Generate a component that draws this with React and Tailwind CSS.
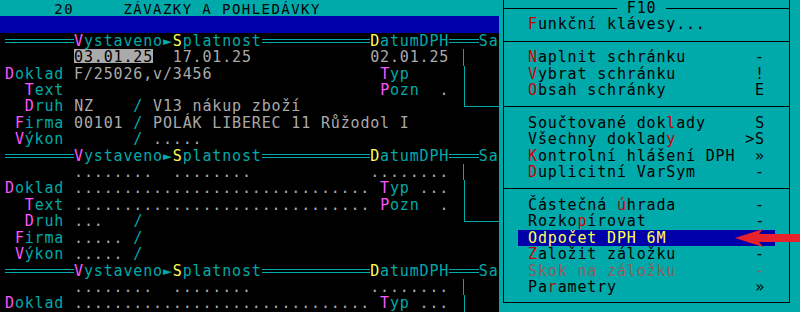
import React from 'react';

// DOS-like text grid: 9.87px per column, 16.42px per row
const CY = 'text-[#00aaaa]';
const GR = 'text-[#aaaaaa]';

function Row({ children, className = '' }) {
  return <div className={`h-[16.42px] whitespace-pre ${className}`}>{children}</div>;
}

function Lbl({ text }) {
  return (
    <>
      <span className="text-[#ff55ff]">{text[0]}</span>
      <span className={CY}>{text.slice(1)}</span>
    </>
  );
}

function G({ children }) {
  return <span className={GR}>{children}</span>;
}

function Dbl({ w }) {
  return (
    <span className={`inline-block align-top h-[16.42px] pt-[6px] ${w}`}>
      <span className="block h-[4px] border-y border-[#00aaaa]" />
    </span>
  );
}

function VLine() {
  return (
    <span className="inline-block align-top w-[9.87px] h-[16.42px]">
      <span className="block ml-[4.4px] h-full border-l border-[#00aaaa]" />
    </span>
  );
}

function Corner() {
  return (
    <>
      <span className="inline-block align-top w-[9.87px] h-[16.42px]">
        <span className="block ml-[4.4px] h-[8.7px] border-l border-b border-[#00aaaa]" />
      </span>
      <span className="inline-block align-top w-[29.61px] h-[8.7px] border-b border-[#00aaaa]" />
    </>
  );
}

function Header() {
  return (
    <Row>
      <Dbl w="w-[69.09px]" />
      <span className="text-[#ff55ff]">V</span>
      <span className={CY}>ystaveno►</span>
      <span className="text-[#ffff55]">S</span>
      <span className={CY}>platnost</span>
      <Dbl w="w-[108.57px]" />
      <span className="text-[#ffff55]">D</span>
      <span className={CY}>atumDPH</span>
      <Dbl w="w-[29.61px]" />
      <span className={CY}>Sa</span>
    </Row>
  );
}

const DOTS30 = '..............................';

function EmptyBlock({ rows = 7 }) {
  const all = [
    <Header key="h" />,
    <Row key="d">
      {'       '}<G>........</G>{'  '}<G>........</G>{'            '}<G>........</G>{' '}<VLine />
    </Row>,
    <Row key="dk">
      <Lbl text="Doklad" />{' '}<G>{DOTS30}</G>{' '}<Lbl text="Typ" />{' '}<G>...</G>{' '}<VLine />
    </Row>,
    <Row key="t">
      {'  '}<Lbl text="Text" />{' '}<G>{DOTS30}</G>{' '}<Lbl text="Pozn" />{'  '}<G>.</G>{' '}<VLine />
    </Row>,
    <Row key="dr">
      {'  '}<Lbl text="Druh" />{' '}<G>...</G>{'   '}<span className={CY}>/</span>{' '.repeat(32)}<Corner />
    </Row>,
    <Row key="f">
      {' '}<Lbl text="Firma" />{' '}<G>.....</G>{' '}<span className={CY}>/</span>
    </Row>,
    <Row key="v">
      {' '}<Lbl text="Výkon" />{' '}<G>.....</G>{' '}<span className={CY}>/</span>
    </Row>,
  ];
  return <>{all.slice(0, rows)}</>;
}

const MENU = [
  { hot: 'F', post: 'unkční klávesy...', sc: '' },
  'sep',
  { hot: 'N', post: 'aplnit schránku', sc: '-' },
  { hot: 'V', post: 'ybrat schránku', sc: '!' },
  { hot: 'O', post: 'bsah schránky', sc: 'E' },
  'sep',
  { pre: 'Součtované dok', hot: 'l', post: 'ady', sc: 'S' },
  { pre: 'Všechny doklad', hot: 'y', post: '', sc: '>S' },
  { hot: 'K', post: 'ontrolní hlášení DPH', sc: '»' },
  { hot: 'D', post: 'uplicitní VarSym', sc: '-' },
  'sep',
  { pre: 'Částečná ', hot: 'ú', post: 'hrada', sc: '-' },
  { pre: 'Rozko', hot: 'p', post: 'írovat', sc: '-' },
  { pre: 'Odpočet DPH 6M', sc: '', active: true },
  { hot: 'Z', post: 'aložit záložku', sc: '-' },
  { pre: 'Skok na záložku', sc: '-', disabled: true },
  { pre: 'Pa', hot: 'r', post: 'ametry', sc: '»' },
];

function MenuItem({ item }) {
  const pre = item.pre || '';
  const hot = item.hot || '';
  const post = item.post || '';
  const label = pre + hot + post;
  const pad = ' '.repeat(Math.max(0, 25 - item.sc.length - 1 - label.length));
  let cls = 'text-black';
  if (item.active) cls = 'bg-[#0000aa] text-[#ffff55]';
  if (item.disabled) cls = 'text-[#8e5e5e]';
  return (
    <div className={`ml-[14.3px] w-[256.62px] h-[16.42px] whitespace-pre ${cls}`}>
      {' '}{pre}
      {hot && <span className="text-[#c40000]">{hot}</span>}
      {post}{pad}{item.sc}
    </div>
  );
}

function Menu() {
  return (
    <div className="ml-[4.4px] mt-[7.7px] w-[287px] border-x border-b border-black pb-[6.6px]">
      <div className="-mt-[7.7px] h-[16.42px] flex items-center">
        <div className="w-[113.1px] h-px bg-black" />
        <span className="whitespace-pre text-black">{' F10 '}</span>
        <div className="flex-1 h-px bg-black" />
      </div>
      {MENU.map((item, i) =>
        item === 'sep' ? (
          <div key={i} className="h-[16.42px] flex items-center">
            <div className="w-full h-px bg-black" />
          </div>
        ) : (
          <MenuItem key={i} item={item} />
        )
      )}
    </div>
  );
}

export default function App() {
  return (
    <div className="relative w-[800px] h-[312px] overflow-hidden bg-[#00aaaa] flex font-['DejaVu_Sans_Mono',monospace] text-[15px] leading-[16.42px] tracking-[0.84px]">
      {/* left: document list */}
      <div className="w-[498.5px] shrink-0 flex flex-col">
        <Row className="pl-[5px] pt-[3px] text-black text-[14px] tracking-[1.44px] leading-[13.42px]">
          {'     20     ZÁVAZKY A POHLEDÁVKY'}
        </Row>
        <div className="h-[16.42px] bg-[#0000aa]" />
        <div className="flex-1 bg-black pl-[5px]">
          <Header />
          <Row>
            {'       '}
            <span className="inline-block align-top h-[13.5px] bg-[#aaaaaa] text-black">03.01.25</span>
            {'  '}<G>17.01.25</G>{'            '}<G>02.01.25</G>{' '}<VLine />
          </Row>
          <Row>
            <Lbl text="Doklad" />{' '}<G>F/25026,v/3456</G>{' '.repeat(17)}<Lbl text="Typ" />{'     '}<VLine />
          </Row>
          <Row>
            {'  '}<Lbl text="Text" />{' '.repeat(32)}<Lbl text="Pozn" />{'  '}<G>.</G>{' '}<VLine />
          </Row>
          <Row>
            {'  '}<Lbl text="Druh" />{' '}<G>NZ</G>{'    '}<span className={CY}>/</span>{' '}<G>V13 nákup zboží</G>{' '.repeat(16)}<Corner />
          </Row>
          <Row>
            {' '}<Lbl text="Firma" />{' '}<G>00101</G>{' '}<span className={CY}>/</span>{' '}<G>POLÁK LIBEREC 11 Růžodol I</G>
          </Row>
          <Row>
            {' '}<Lbl text="Výkon" />{'       '}<span className={CY}>/</span>{' '}<G>.....</G>
          </Row>
          <EmptyBlock />
          <EmptyBlock rows={3} />
        </div>
      </div>

      {/* right: F10 menu */}
      <div className="flex-1">
        <Menu />
      </div>

      {/* red annotation arrow */}
      <svg className="absolute left-[735px] top-[228px]" width="65" height="20" viewBox="0 0 65 20">
        <path d="M0 10 L28 1 L24 6 L65 6 L65 14 L24 14 L28 19 Z" fill="#e8222a" />
      </svg>
    </div>
  );
}
